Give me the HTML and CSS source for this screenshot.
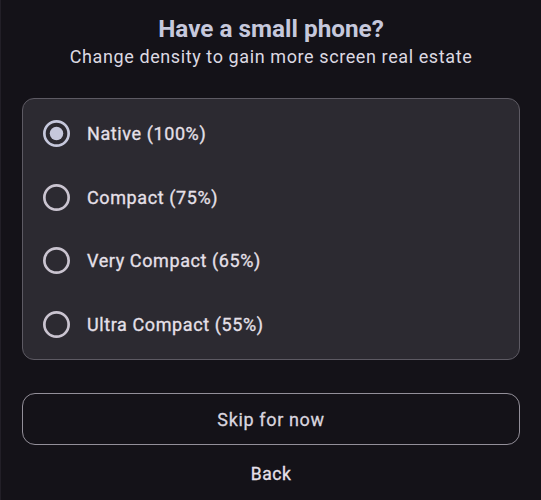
FILE: index.html
```html
<!DOCTYPE html>
<html lang="en">
<head>
<meta charset="utf-8">
<title>Density</title>
<link rel="stylesheet" href="styles.css">
</head>
<body>
<main class="screen">
  <h1 class="title">Have a small phone?</h1>
  <p class="subtitle">Change density to gain more screen real estate</p>
  <div class="card" role="radiogroup">
    <div class="option selected" role="radio" aria-checked="true">
      <svg class="radio" viewBox="0 0 20 20"><circle cx="10" cy="10" r="9" fill="none" stroke="currentColor" stroke-width="2"/><circle cx="10" cy="10" r="5" fill="currentColor"/></svg>
      <span class="label">Native (100%)</span>
    </div>
    <div class="option" role="radio" aria-checked="false">
      <svg class="radio" viewBox="0 0 20 20"><circle cx="10" cy="10" r="9" fill="none" stroke="currentColor" stroke-width="2"/></svg>
      <span class="label">Compact (75%)</span>
    </div>
    <div class="option" role="radio" aria-checked="false">
      <svg class="radio" viewBox="0 0 20 20"><circle cx="10" cy="10" r="9" fill="none" stroke="currentColor" stroke-width="2"/></svg>
      <span class="label">Very Compact (65%)</span>
    </div>
    <div class="option" role="radio" aria-checked="false">
      <svg class="radio" viewBox="0 0 20 20"><circle cx="10" cy="10" r="9" fill="none" stroke="currentColor" stroke-width="2"/></svg>
      <span class="label">Ultra Compact (55%)</span>
    </div>
  </div>
  <button class="skip" type="button">Skip for now</button>
  <button class="back" type="button">Back</button>
</main>
</body>
</html>
```
FILE: styles.css
```css
html, body {
  margin: 0;
  padding: 0;
  background: #141218;
}
body {
  font-family: Roboto, "Noto Sans", sans-serif;
  color: #e6e0e9;
  min-height: 500px;
  box-sizing: border-box;
  border-left: 1px solid #221f27;
}
.screen {
  display: flex;
  flex-direction: column;
  align-items: stretch;
  padding: 15px 21px 0 21px;
}
.title {
  margin: 0;
  text-align: center;
  font-size: 24.3px;
  line-height: 28px;
  font-weight: 700;
  color: #c6c8dc;
}
.subtitle {
  margin: 2px 0 0 0;
  text-align: center;
  font-size: 18px;
  line-height: 24px;
  letter-spacing: 0.6px;
  color: #dcd9e2;
}
.card {
  margin-top: 29px;
  background: #2c2a31;
  border: 1px solid #5d5a63;
  border-radius: 12px;
  padding: 3px 0;
  display: flex;
  flex-direction: column;
}
.option {
  height: 63.5px;
  display: flex;
  align-items: center;
  gap: 17px;
  padding-left: 20px;
}
.radio {
  width: 27px;
  height: 27px;
  flex: none;
  color: #cac4d0;
}
.option.selected .radio {
  color: #c6c8dc;
}
.label {
  font-size: 18px;
  font-weight: 400;
  -webkit-text-stroke: 0.3px currentColor;
  letter-spacing: 0.6px;
  color: #e6e0e9;
}
.skip {
  margin-top: 33px;
  height: 52px;
  background: transparent;
  border: 1px solid #938f99;
  border-radius: 13px;
  font-family: inherit;
  font-size: 18px;
  font-weight: 400;
  -webkit-text-stroke: 0.3px currentColor;
  letter-spacing: 0.65px;
  color: #d9d5df;
}
.back {
  margin: 17px auto 0;
  background: transparent;
  border: none;
  padding: 0;
  font-family: inherit;
  font-size: 17.5px;
  line-height: 24px;
  font-weight: 400;
  -webkit-text-stroke: 0.3px currentColor;
  letter-spacing: 0.55px;
  color: #e6e0e9;
}
```
